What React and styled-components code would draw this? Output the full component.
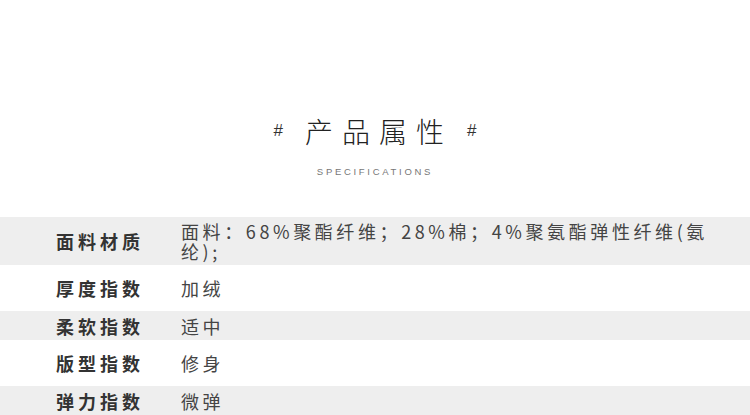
import React from "react";
import styled, { createGlobalStyle } from "styled-components";

const GlobalStyle = createGlobalStyle`
  html, body {
    margin: 0;
    padding: 0;
    background: #fff;
  }
  body {
    font-family: "Noto Sans CJK SC", "Liberation Sans", sans-serif;
    color: #333;
  }
`;

const Page = styled.div`
  width: 750px;
  height: 415px;
  overflow: hidden;
  background: #fff;
`;

const Header = styled.header`
  display: flex;
  flex-direction: column;
  align-items: center;
  padding-top: 111px;
`;

const TitleRow = styled.div`
  display: flex;
  align-items: center;
  height: 40px;
`;

const Hash = styled.span`
  font-family: "Liberation Sans", sans-serif;
  font-size: 17px;
  color: #333;
`;

const TitleText = styled.h1`
  margin: 0 14px 0 22px;
  font-size: 28px;
  font-weight: 300;
  letter-spacing: 9px;
  line-height: 40px;
  color: #222;
`;

const Subtitle = styled.div`
  margin-top: 14px;
  font-family: "Liberation Sans", sans-serif;
  font-size: 9.5px;
  line-height: 14px;
  letter-spacing: 2.7px;
  color: #777;
`;

const Table = styled.div`
  margin-top: 38px;
  display: flex;
  flex-direction: column;
`;

const Row = styled.div`
  display: grid;
  grid-template-columns: 125px 1fr;
  align-items: center;
  padding: 4px 26px 4px 56px;
  min-height: ${(p) => (p.$shade ? "29px" : "46px")};
  box-sizing: border-box;
  background: ${(p) => (p.$shade ? "#eeeeee" : "#fff")};
`;

const Label = styled.div`
  font-size: 18px;
  font-weight: 700;
  letter-spacing: 4px;
  line-height: 20px;
  color: #333;
`;

const Value = styled.div`
  font-size: 18px;
  letter-spacing: 3.6px;
  line-height: 20px;
  color: #444;
`;

const specs = [
  ["面料材质", "面料：68%聚酯纤维；28%棉；4%聚氨酯弹性纤维(氨纶);"],
  ["厚度指数", "加绒"],
  ["柔软指数", "适中"],
  ["版型指数", "修身"],
  ["弹力指数", "微弹"],
];

const App = () => {
  return (
    <Page>
      <GlobalStyle />
      <Header>
        <TitleRow>
          <Hash>#</Hash>
          <TitleText>产品属性</TitleText>
          <Hash>#</Hash>
        </TitleRow>
        <Subtitle>SPECIFICATIONS</Subtitle>
      </Header>
      <Table>
        {specs.map(([label, value], i) => (
          <Row key={label} $shade={i % 2 === 0}>
            <Label>{label}</Label>
            <Value>{value}</Value>
          </Row>
        ))}
      </Table>
    </Page>
  );
};

export default App;
